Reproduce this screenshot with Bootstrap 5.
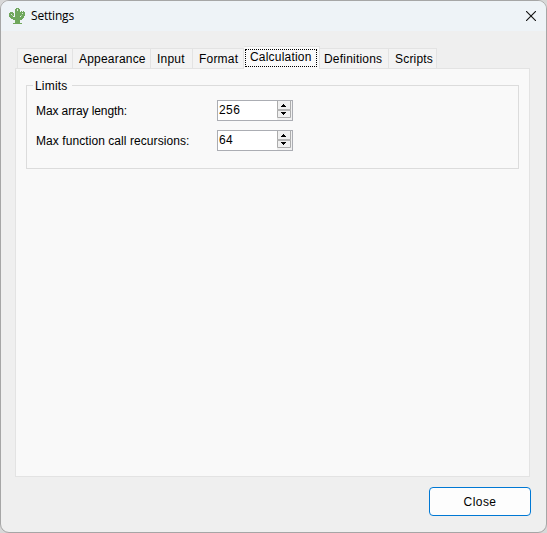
<!DOCTYPE html>
<html lang="en">
<head>
<meta charset="utf-8">
<title>Settings</title>
<link href="https://cdn.jsdelivr.net/npm/bootstrap@5.3.0/dist/css/bootstrap.min.css" rel="stylesheet">
<style>
body{background:#d8d8d8;font:12px/15px "Liberation Sans",Arial,sans-serif;color:#000}
.window{width:547px;height:533px;background:#efefef;border:1px solid #a6a6a6;border-radius:9px}
.titlebar{height:30px;background:#eef3f7;padding:0 10px 0 8px;font:12px/16px "Open Sans","Noto Sans",sans-serif}
.caption{margin-left:5px;letter-spacing:-.2px}
.tabstrip{margin:15px 0 0 16px;height:22px;position:relative;z-index:1}
.tabstrip .tab{height:20px;background:#f3f3f3;border:1px solid #e3e3e3;border-width:1px 1px 0 0;padding:3px 0 0 6px;color:#000;white-space:nowrap}
.tabstrip .tab:first-child{border-left-width:1px;padding-left:5px}
.tabstrip .tab.w6{padding-left:4px}
.tabstrip .tab.active{height:23px;background:#f9f9f9;padding:2px 2px 0 1px;margin-bottom:-1px}
.focusbox{border:1px dotted #000;height:18px;padding:0 0 0 4px;line-height:15px}
.w1{width:56px}.w2{width:78px}.w3{width:42px}.w4{width:51px}.w5{width:76px}.w6{width:69px}.w7{width:48px}
.pane{margin:0 16px 0 14px;height:409px;background:#f9f9f9;border:1px solid #e3e3e3;padding:8px 10px}
.limits{height:92px;position:relative}
.limits:before{content:"";position:absolute;inset:8px 0 0 0;border:1px solid #dcdcdc;z-index:0}
.limits>*{position:relative}
.limits .heading{width:39px;line-height:17px;background:#f9f9f9;padding:1px 0 0 2px;margin:0 0 0 7px;height:17px}
.limits .field{height:21px;margin:6px 0 9px 10px}
.limits .field label{width:181px;white-space:nowrap;padding-top:2px}
.spin{width:76px;height:21px;background:#fff;border:1px solid #abadb3;padding:0 0 0 1px}
.spin .val{padding:2px 0 0;letter-spacing:.4px}
.steps{width:15px;height:19px;background:#f0f0f0}
.closebtn{width:102px;height:29px;margin:10px 15px 0 auto;border:1px solid #0078d4;border-radius:4px;background:#fdfdfd;padding:0;font-size:12px;letter-spacing:.45px;color:#000}
.t1{letter-spacing:.2px}.t3{letter-spacing:.07px}.t4{letter-spacing:-.1px}
</style>
</head>
<body>
<main class="window overflow-hidden">
<header class="titlebar d-flex align-items-center">
<svg width="17" height="17" viewBox="0 0 17 17" fill="#6fa75c" shape-rendering="crispEdges"><path d="M6 1h1V0h3v1h1v8h1V8h-1V4h1V3h1v1h1V3h1v1h1v4h-1v2h-1v1h-1v1h-2v3h2v1H4v-1h2v-3H4v-1H2v-1H1V9H0V5h1V4h3v1h1v3H4v1h2z"/><path fill="#dbe8dc" d="M8 1h1v2H8zM2 6h1v1H2zM13 5h1v1h-1z"/><path fill="#a4c79a" d="M3 7h1v1H3zM12 7h1v1h-1z"/></svg>
<span class="caption">Settings</span>
<svg class="ms-auto" width="10" height="10" viewBox="0 0 10 10" fill="none" stroke="#111" stroke-width="1.1"><path d="M0 0l10 10M10 0L0 10"/></svg>
</header>
<nav class="tabstrip d-flex align-items-end">
<div class="tab w1"><span class="t1">General</span></div>
<div class="tab w2"><span class="t1">Appearance</span></div>
<div class="tab w3"><span class="t1">Input</span></div>
<div class="tab w4"><span class="t1">Format</span></div>
<div class="tab w5 active"><div class="focusbox"><span class="t1">Calculation</span></div></div>
<div class="tab w6"><span class="t1">Definitions</span></div>
<div class="tab w7"><span class="t1">Scripts</span></div>
</nav>
<section class="pane">
<div class="limits" role="group">
<div class="heading"><span class="t1">Limits</span></div>
<div class="field d-flex align-items-center"><label for="len" class="t4">Max array length:</label>
<div class="spin d-flex" id="len"><span class="val">256</span><div class="steps ms-auto"><svg class="d-block" width="14" height="17"><path d="M.5 0v16.500h13V0" fill="none" stroke="#acacac"/><path d="M0 9h14" stroke="#b4b4b4" stroke-width="2"/><path d="M4 6h5v-1h-1V4H7V3H6v1H5v1H4zM4 11h5v1H8v1H7v1H6v-1H5v-1H4z"/></svg></div></div></div>
<div class="field d-flex align-items-center"><label for="rec" class="t3">Max function call recursions:</label>
<div class="spin d-flex" id="rec"><span class="val">64</span><div class="steps ms-auto"><svg class="d-block" width="14" height="17"><path d="M.5 0v16.500h13V0" fill="none" stroke="#acacac"/><path d="M0 9h14" stroke="#b4b4b4" stroke-width="2"/><path d="M4 6h5v-1h-1V4H7V3H6v1H5v1H4zM4 11h5v1H8v1H7v1H6v-1H5v-1H4z"/></svg></div></div></div>
</div>
</section>
<button class="btn closebtn d-block" type="button">Close</button>
</main>
<script src="https://cdn.jsdelivr.net/npm/bootstrap@5.3.0/dist/js/bootstrap.bundle.min.js"></script>
</body>
</html>
